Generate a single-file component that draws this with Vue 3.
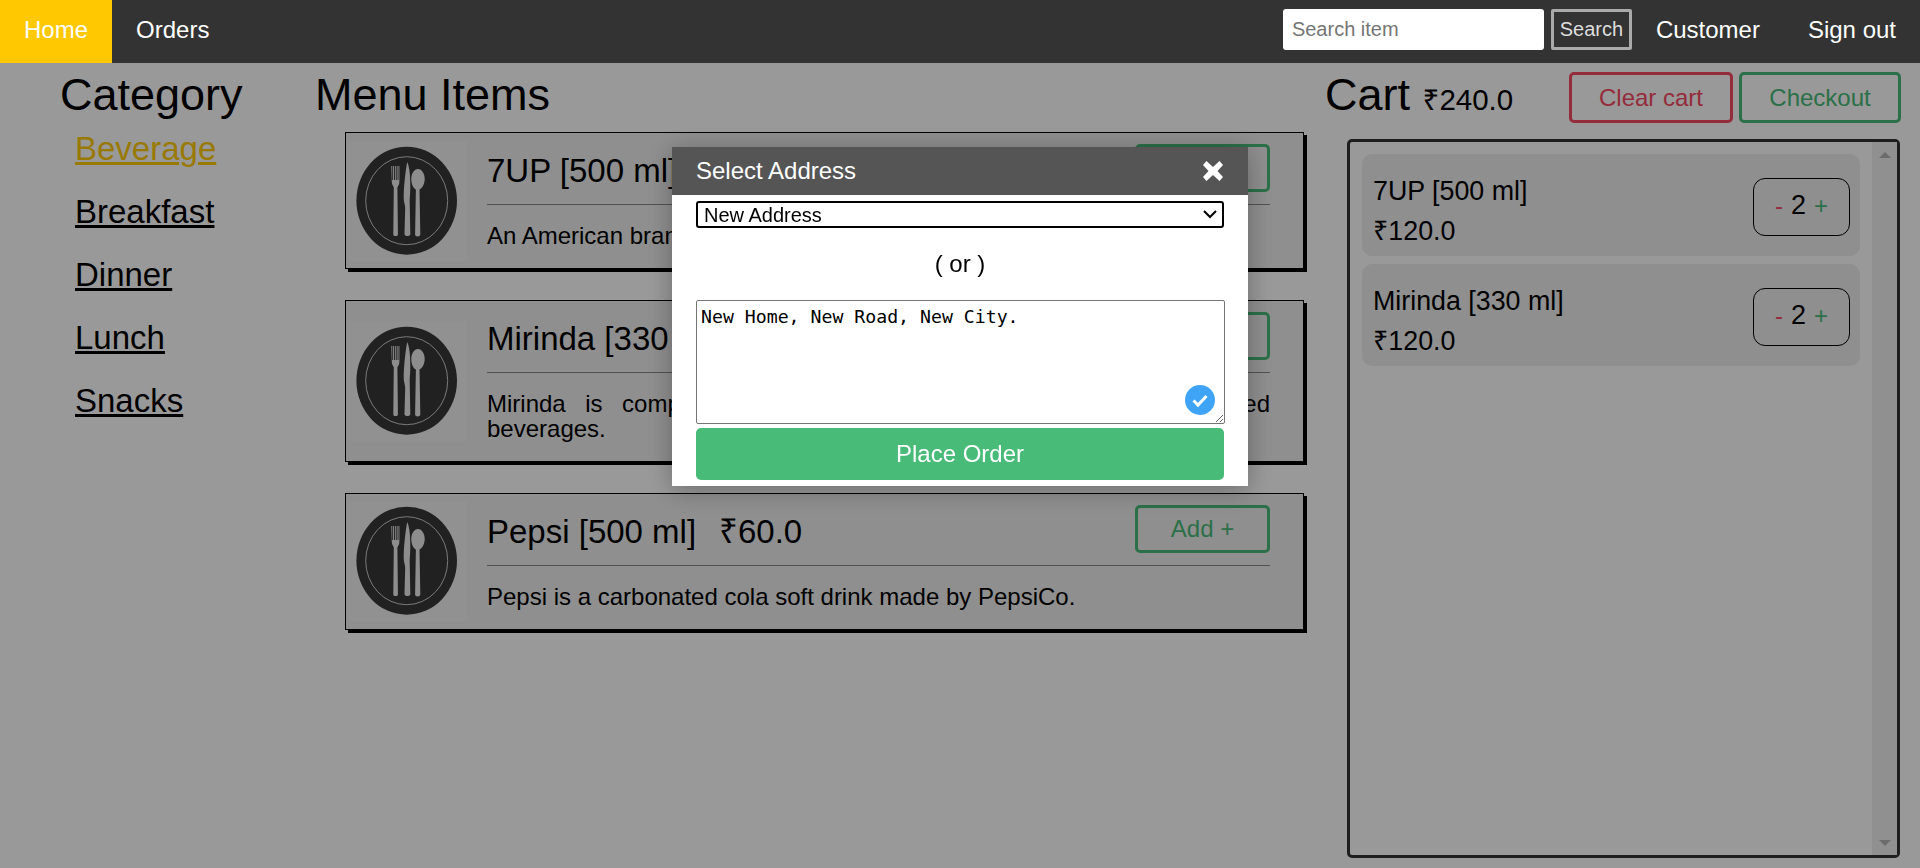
<template>
  <div class="page">
    <nav class="topnav">
      <a class="nav-link active">Home</a>
      <a class="nav-link">Orders</a>
      <div class="nav-right">
        <input class="search-input" type="text" placeholder="Search item" />
        <button class="search-btn">Search</button>
        <a class="nav-link">Customer</a>
        <a class="nav-link">Sign out</a>
      </div>
    </nav>

    <main class="columns">
      <!-- Category -->
      <section class="category">
        <h1>Category</h1>
        <ul>
          <li v-for="(cat, index) in categories" :key="cat">
            <a :class="{ selected: index === 0 }">{{ cat }}</a>
          </li>
        </ul>
      </section>

      <!-- Menu items -->
      <section class="menu">
        <h1>Menu Items</h1>
        <div v-for="item in items" :key="item.name" class="menu-card">
          <svg class="plate" viewBox="0 0 120 120" width="120" height="120">
            <rect width="120" height="120" fill="#f2f2f2" />
            <ellipse cx="59.7" cy="59.7" rx="50.3" ry="54" fill="#383838" />
            <ellipse cx="59.7" cy="59.7" rx="41" ry="44" fill="none" stroke="#ccc" stroke-width="1" />
            <path fill="#ececec" d="M44.300 25h.9v14h.9V25h.9v14h.9V25h.9v14h.9V25h.9v14h.9V25h.9v16c0 3-2 4.500-2 5.500l.5 47c0 2-4.600 2-4.600 0l.5-47c0-1-2-2.500-2-5.500z" />
            <path fill="#ececec" d="M60.200 21c2 4 3.100 12 3.100 24 0 8-.6 12-.6 16l.6 32c0 2.700-5.800 2.700-5.800 0l.7-26c0-3-1.500-6-1.500-10 0-12 2-28 3.500-36z" />
            <path fill="#ececec" d="M71 28c3.800 0 6.700 4.500 6.700 10 0 5.500-2.900 9.500-5.200 10.500l.8 45c0 2.600-5.200 2.600-5.200 0l.8-45c-2.300-1-4.600-5-4.600-10.500 0-5.500 2.900-10 6.700-10z" />
          </svg>
          <div class="card-body">
            <div class="card-head">
              <h2>{{ item.name }}<span class="price">₹{{ item.price }}</span></h2>
              <button class="outline-btn green add-btn">Add +</button>
            </div>
            <p>{{ item.desc }}</p>
          </div>
        </div>
      </section>

      <!-- Cart -->
      <section class="cart">
        <div class="cart-head">
          <h1>Cart <span class="cart-total">₹240.0</span></h1>
          <button class="outline-btn red clear-btn">Clear cart</button>
          <button class="outline-btn green checkout-btn">Checkout</button>
        </div>
        <div class="cart-box">
          <div class="cart-list">
            <div v-for="line in cartLines" :key="line.name" class="cart-item">
              <div class="cart-text">
                <div>{{ line.name }}</div>
                <div>₹{{ line.total }}</div>
              </div>
              <div class="counter">
                <span class="minus">-</span>
                <span class="qty">{{ line.qty }}</span>
                <span class="plus">+</span>
              </div>
            </div>
          </div>
          <div class="scroll-rail">
            <span class="arrow up"></span>
            <span class="arrow down"></span>
          </div>
        </div>
      </section>
    </main>

    <!-- Address modal -->
    <div class="overlay">
      <div class="modal">
        <div class="modal-head">
          <span>Select Address</span>
          <svg class="close" viewBox="0 0 20 20" width="20" height="20">
            <path fill="#fff" d="M3.500 0 10 6 16.500 0 20 4 14.500 10 20 16 16.500 20 10 14 3.500 20 0 16 5.500 10 0 4z" />
          </svg>
        </div>
        <div class="modal-body">
          <select class="address-select">
            <option>New Address</option>
          </select>
          <div class="or">( or )</div>
          <div class="textarea-wrap">
            <textarea class="address-text" :value="address"></textarea>
            <svg class="check" viewBox="0 0 30 30" width="30" height="30">
              <circle cx="15" cy="15" r="15" fill="#3fa4f5" />
              <path d="M8.500 15.500l4.500 4.500 8.500-9" fill="none" stroke="#fff" stroke-width="3" />
            </svg>
          </div>
          <button class="place-btn">Place Order</button>
        </div>
      </div>
    </div>
  </div>
</template>

<script setup>
  import { ref } from 'vue'

  const categories = ['Beverage', 'Breakfast', 'Dinner', 'Lunch', 'Snacks']

  const items = [
    { name: '7UP [500 ml]', price: '60.0', desc: 'An American brand of lemon-lime flavored soft drink.' },
    { name: 'Mirinda [330 ml]', price: '60.0', desc: 'Mirinda is comparable to other sweet, fruit-tasting citrus flavored beverages.' },
    { name: 'Pepsi [500 ml]', price: '60.0', desc: 'Pepsi is a carbonated cola soft drink made by PepsiCo.' }
  ]

  const cartLines = [
    { name: '7UP [500 ml]', total: '120.0', qty: 2 },
    { name: 'Mirinda [330 ml]', total: '120.0', qty: 2 }
  ]

  const address = ref('New Home, New Road, New City.')
</script>

<style>
  body {
    overflow: hidden;
    background: #fff;
  }
</style>

<style scoped>
  .page {
    height: 868px;
    overflow: hidden;
    font-family: "Liberation Sans", "Noto Sans", Arial, sans-serif;
    color: #000;
  }

  /* Top nav */
  .topnav {
    display: flex;
    height: 63px;
    background: #333;
  }

  .nav-link {
    padding: 0 24px;
    font-size: 24px;
    line-height: 60px;
    color: #fff;
  }

    .nav-link.active {
      background: #ffc800;
    }

  .nav-right {
    margin-left: auto;
    display: flex;
    align-items: flex-start;
  }

  .search-input {
    box-sizing: border-box;
    width: 261px;
    height: 41px;
    margin: 9px 7px 0 0;
    padding: 0 9px;
    border: none;
    border-radius: 3px;
    background: #fff;
    font-family: inherit;
    font-size: 20px;
  }

  .search-btn {
    box-sizing: border-box;
    width: 81px;
    height: 41px;
    margin-top: 9px;
    padding: 0;
    border: 3px solid #aaa;
    border-radius: 2px;
    background: #333;
    color: #ddd;
    font-family: inherit;
    font-size: 20px;
  }

  /* Columns */
  .columns {
    display: grid;
    grid-template-columns: 315px 1010px 595px;
    height: 805px;
  }

  h1 {
    margin: 6px 0 0;
    font-size: 45px;
    line-height: 52px;
    font-weight: 400;
  }

  .category h1 {
    padding-left: 60px;
  }

  .category ul {
    list-style: none;
    margin: 9px 0 0;
    padding: 0 0 0 75px;
  }

  .category li {
    margin-bottom: 25px;
    font-size: 33px;
  }

  .category a {
    color: #000;
    text-decoration: underline;
    text-decoration-thickness: 3px;
  }

    .category a.selected {
      color: #ffcc00;
    }

  .menu h1 {
    margin-bottom: 11px;
  }

  .menu-card {
    box-sizing: border-box;
    width: 959px;
    margin: 0 0 30.5px 30px;
    padding: 0 33px 0 1px;
    display: flex;
    align-items: center;
    gap: 20px;
    border: 1px solid #000;
    box-shadow: 3px 3px 0 #000;
    background: #eee;
  }

  .plate {
    flex: none;
  }

  .card-body {
    flex: 1;
    padding: 11px 0 19.5px;
  }

  .card-head {
    display: flex;
    justify-content: space-between;
    align-items: center;
    padding-bottom: 12px;
    border-bottom: 1px solid #888;
  }

  h2 {
    margin: 6px 0 0;
    font-size: 33px;
    line-height: 38px;
    font-weight: 400;
  }

  .price {
    margin-left: 23px;
    line-height: 1;
  }

  .card-body p {
    margin: 18px 0 0;
    font-size: 24px;
    line-height: 25.5px;
    text-align: justify;
  }

  .outline-btn {
    box-sizing: border-box;
    padding: 0;
    background: transparent;
    border: 3px solid;
    border-radius: 5px;
    font-family: inherit;
    font-size: 24px;
  }

    .outline-btn.green {
      border-color: #48bb78;
      color: #48bb78;
    }

    .outline-btn.red {
      border-color: #f94a63;
      color: #f94a63;
    }

  .add-btn {
    width: 135px;
    height: 48px;
  }

  /* Cart */
  .cart-head {
    display: flex;
    align-items: flex-start;
    padding-right: 19px;
  }

    .cart-head h1 {
      margin-right: auto;
    }

  .cart-total {
    font-size: 29.5px;
    line-height: 1;
  }

  .clear-btn {
    width: 164px;
    height: 51px;
    margin: 9px 6px 0 0;
  }

  .checkout-btn {
    width: 162px;
    height: 51px;
    margin-top: 9px;
  }

  .cart-box {
    box-sizing: border-box;
    display: flex;
    width: 553px;
    height: 719px;
    margin: 16px 0 0 22px;
    border: 3px solid #333;
    border-radius: 5px;
  }

  .cart-list {
    flex: 1;
    padding: 12px 12px 0;
  }

  .cart-item {
    box-sizing: border-box;
    height: 102px;
    margin-bottom: 8px;
    padding: 0 10px 0 11px;
    display: flex;
    justify-content: space-between;
    align-items: center;
    border-radius: 10px;
    background: #eee;
    font-size: 26.8px;
  }

  .cart-text {
    margin-top: 12px;
    line-height: 40px;
  }

  .counter {
    box-sizing: border-box;
    width: 97px;
    height: 58px;
    margin-top: 4px;
    padding-bottom: 3px;
    display: flex;
    justify-content: center;
    align-items: center;
    gap: 8px;
    border: 1px solid #000;
    border-radius: 12px;
    font-size: 24px;
  }

  .minus {
    color: #f94a63;
  }

  .plus {
    color: #48bb78;
  }

  .qty {
    font-size: 27px;
  }

  .scroll-rail {
    flex: none;
    width: 25px;
    padding: 10px 0 9px;
    display: flex;
    flex-direction: column;
    justify-content: space-between;
    align-items: center;
    background: #f1f1f1;
  }

  .arrow {
    width: 0;
    height: 0;
    border-left: 6px solid transparent;
    border-right: 6px solid transparent;
  }

    .arrow.up {
      border-bottom: 6px solid #b4b4b4;
    }

    .arrow.down {
      border-top: 6px solid #b4b4b4;
    }

  /* Modal */
  .overlay {
    position: fixed;
    top: 63px;
    right: 0;
    bottom: 0;
    left: 0;
    padding-top: 84px;
    display: flex;
    justify-content: center;
    align-items: flex-start;
    background: rgba(0, 0, 0, 0.4);
  }

  .modal {
    width: 576px;
    background: #fff;
    box-shadow: 0 4px 24px rgba(0, 0, 0, 0.3);
  }

  .modal-head {
    height: 48px;
    padding: 0 25px 0 24px;
    display: flex;
    justify-content: space-between;
    align-items: center;
    background: #555;
    color: #fff;
    font-size: 24px;
  }

  .modal-body {
    padding: 6px 24px;
  }

  .address-select {
    box-sizing: border-box;
    display: block;
    width: 528px;
    height: 27px;
    padding: 0 6px;
    appearance: none;
    border: 2px solid #000;
    border-radius: 3px;
    background: #fff url("data:image/svg+xml,%3Csvg xmlns='http://www.w3.org/2000/svg' width='14' height='9'%3E%3Cpath d='M1 1l6 6 6-6' fill='none' stroke='%23000' stroke-width='2'/%3E%3C/svg%3E") no-repeat right 5px center;
    font-family: inherit;
    font-size: 20px;
    color: #000;
  }

  .or {
    margin: 22px 0;
    font-size: 24px;
    text-align: center;
  }

  .textarea-wrap {
    position: relative;
  }

  .address-text {
    box-sizing: border-box;
    display: block;
    width: 529px;
    height: 124px;
    padding: 5px 4px;
    border: 1px solid #767676;
    border-radius: 2px;
    font-family: "DejaVu Sans Mono", "Liberation Mono", monospace;
    font-size: 18.2px;
    color: #000;
  }

  .check {
    position: absolute;
    right: 9px;
    bottom: 9px;
  }

  .place-btn {
    display: block;
    width: 528px;
    height: 52px;
    margin-top: 4px;
    padding: 0;
    border: none;
    border-radius: 5px;
    background: #48bb78;
    color: #fff;
    font-family: inherit;
    font-size: 24px;
  }
</style>
